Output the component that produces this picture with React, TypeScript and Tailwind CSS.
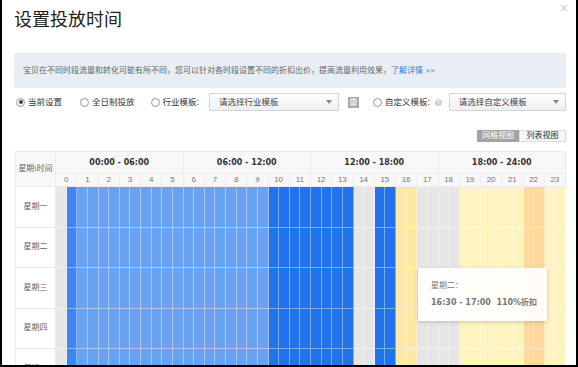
import { FC } from "react";

const font = "font-['Liberation_Sans','Noto_Sans_CJK_SC',sans-serif]";
const numFont = "font-['DejaVu_Sans','Noto_Sans_CJK_SC',sans-serif]";

const G = "bg-[#e6e6e6]";
const M = "bg-[#3e86ef]";
const L = "bg-[#6aa1f1]";
const D = "bg-[#2173ec]";
const O = "bg-[#ffe8a4]";
const Y = "bg-[#fff3bf]";
const P = "bg-[#fdd99e]";

const hourColor = (h: number): [string, string] => {
  if (h === 0) return [G, M];
  if (h <= 9) return [L, L];
  if (h <= 13) return [D, D];
  if (h === 14) return [G, G];
  if (h === 15) return [D, D];
  if (h === 16) return [O, O];
  if (h <= 18) return [G, G];
  if (h === 22) return [P, P];
  return [Y, Y];
};

const hours = Array.from({ length: 24 }, (_, i) => i);
const cells = hours.flatMap((h) => hourColor(h));
const groups = ["00:00 - 06:00", "06:00 - 12:00", "12:00 - 18:00", "18:00 - 24:00"];
const days = ["星期一", "星期二", "星期三", "星期四", "星期五"];

const Radio: FC<{ checked?: boolean; label: string; className?: string }> = ({ checked, label, className }) => (
  <div className={`flex items-center gap-[3px] ${className ?? ""}`}>
    <span className="flex h-[9px] w-[9px] items-center justify-center rounded-full border border-[#9a9a9a] bg-white">
      {checked && <span className="h-[4px] w-[4px] rounded-full bg-[#444]" />}
    </span>
    <span className="text-[8.5px] text-[#333]">{label}</span>
  </div>
);

const Select: FC<{ text: string; className?: string }> = ({ text, className }) => (
  <div className={`flex h-[18px] items-center justify-between border border-[#d6d6d6] bg-gradient-to-b from-white to-[#efefef] pl-[9px] pr-[6px] ${className ?? ""}`}>
    <span className="text-[8.5px] text-[#444]">{text}</span>
    <span className="h-0 w-0 border-x-[3.5px] border-t-[4px] border-x-transparent border-t-[#888]" />
  </div>
);

export default function App() {
  return (
    <div className={`relative h-[367px] w-[578px] overflow-hidden border-x-2 border-b-2 border-black bg-white ${font}`}>
      <span className="absolute right-[8px] top-[0px] text-[14px] leading-[16px] text-[#cfcfcf]">×</span>
      <div className="pl-[12px] pr-[10px] pt-[8px]">
        <h1 className="text-[18px] leading-[24px] text-[#222]">设置投放时间</h1>

        <div className="mt-[21px] flex h-[35px] items-center bg-[#e8eef4] px-[9px] text-[8px] text-[#666]">
          宝贝在不同时段流量和转化可能有所不同，您可以针对各时段设置不同的折扣出价，提高流量利用效果，
          <span className="text-[#3a7bd5]">了解详情 &gt;&gt;</span>
        </div>

        <div className="mt-[5px] flex h-[18px] items-center pl-[2px]">
          <Radio checked label="当前设置" />
          <Radio label="全日制投放" className="ml-[18px]" />
          <Radio label="行业模板:" className="ml-[16px]" />
          <Select text="请选择行业模板" className="ml-[10px] w-[130px]" />
          <span className="ml-[9px] flex h-[11px] w-[11px] items-center justify-center bg-[#ababab]">
            <svg width="7" height="8" viewBox="0 0 7 8">
              <path d="M1 1h5v6H1z" fill="none" stroke="#fff" strokeWidth="1" />
              <path d="M2.2 3h2.6M2.2 5h2.6M3.5 1v6" stroke="#fff" strokeWidth="0.8" />
            </svg>
          </span>
          <Radio label="自定义模板:" className="ml-[14px]" />
          <span className="ml-[5px] flex h-[7px] w-[7px] items-center justify-center rounded-full bg-[#cfcfcf] text-[6px] leading-none text-white">?</span>
          <Select text="请选择自定义模板" className="ml-[7px] flex-1" />
        </div>

        <div className="mt-[19px] flex h-[12px] justify-end">
          <span className="flex w-[42px] items-center justify-center bg-[#a3a3a3] text-[8px] text-white">网格视图</span>
          <span className="flex w-[47px] items-center justify-center border border-[#dedede] bg-[#f6f6f6] text-[8px] text-[#333]">列表视图</span>
        </div>

        <div className="relative ml-px mt-[9px]">
          <div className="grid grid-cols-[40px_repeat(48,minmax(0,1fr))] border-l border-t border-[#ececec]">
            <div className="row-span-2 flex items-center justify-center border-b border-r border-[#ececec] bg-[#f8f8f8] text-[8px] text-[#666]">
              星期\时间
            </div>
            {groups.map((g) => (
              <div key={g} className={`col-span-12 flex h-[22px] items-center justify-center border-b border-r border-[#ececec] bg-[#f8f8f8] text-[8px] font-bold text-[#333] ${numFont}`}>
                {g}
              </div>
            ))}
            {hours.map((h) => (
              <div key={h} className="col-span-2 flex h-[13px] items-center justify-center border-b border-r border-[#ececec] bg-[#f8f8f8] text-[8px] text-[#777]">
                {h}
              </div>
            ))}
            {days.map((day) => (
              <div key={day} className="contents">
                <div className="flex h-[40.5px] items-center justify-center border-b border-r border-[#ececec] bg-white text-[8px] text-[#666]">
                  {day}
                </div>
                {cells.map((c, i) => (
                  <div key={i} className={`h-[40.5px] border-b border-r border-white/40 ${c}`} />
                ))}
              </div>
            ))}
          </div>

          <div className="absolute left-[403px] top-[117px] flex h-[53px] w-[129px] flex-col justify-center gap-[5px] bg-white/90 pl-[13px] text-[8px] text-[#777] shadow-[0_1px_4px_rgba(0,0,0,0.2)]">
            <span>星期二：</span>
            <span className={`font-bold ${numFont}`}>16:30 - 17:00&nbsp;&nbsp;110%折扣</span>
          </div>
        </div>
      </div>
    </div>
  );
}
